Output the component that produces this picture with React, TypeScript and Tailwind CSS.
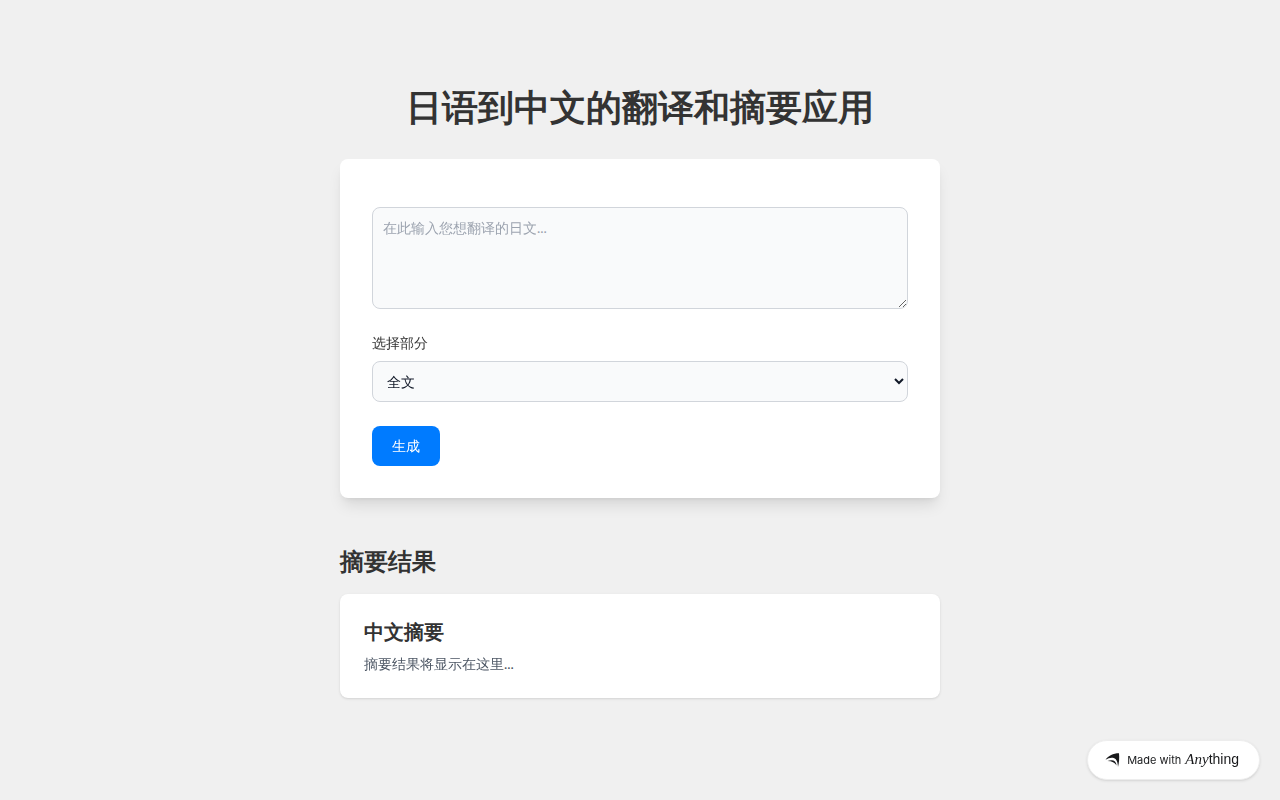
import React, { useState } from "react";

const parts = ["全文", "标题", "正文", "结论"];

const MadeWithBadge = () => {
    return (
        <a
            href="#"
            aria-label="Made with Anything"
            className="fixed bottom-5 right-5 flex h-[40px] items-center rounded-full border border-[#ededed] bg-white pl-[17px] pr-5 text-[#18191b] shadow-sm"
        >
            <svg width="16" height="16" viewBox="0 0 16 16" fill="currentColor" className="mr-1.5">
                <path d="M.5 7.800C3.500 3.900 8 1.300 14 1.300c.5 5.200.1 9.700-1 13.700C12.800 10.300 11.600 7 8.700 6.100 6.200 5.400 3.300 6.200.5 7.800Z" />
                <path d="M2.500 9.100c4.800-2 8.700-.7 9.100 4.500-1.900-3-4.600-4.400-9.100-4.500Z" />
            </svg>
            <span className="flex items-baseline">
                <span className="mr-1 text-[11px] font-['Inter',sans-serif]">Made with</span>
                <span className="text-[15px] font-['Liberation_Serif',serif] italic">Any</span>
                <span className="text-[14px] font-['Liberation_Sans',sans-serif]">thing</span>
            </span>
        </a>
    );
};

const App = () => {
    const [text, setText] = useState("");
    const [part, setPart] = useState("全文");
    const [summary, setSummary] = useState("");

    const handleSubmit = (e: React.FormEvent) => {
        e.preventDefault();
        setSummary(text ? `${part}：${text}` : "");
    };

    return (
        <div className="min-h-screen bg-[#f0f0f0] px-4 py-20 text-sm text-[#333] font-['Lato','WenQuanYi_Zen_Hei','Noto_Sans_CJK_SC',sans-serif]">
            <main className="mx-auto max-w-[600px]">
                <h1 className="mb-[22px] text-center text-4xl leading-[57px] font-semibold font-['Roboto',sans-serif]">日语到中文的翻译和摘要应用</h1>
                <form onSubmit={handleSubmit} className="rounded-lg bg-white px-8 pt-12 pb-8 shadow-lg">
                    <textarea
                        aria-label="日文"
                        placeholder="在此输入您想翻译的日文..."
                        value={text}
                        onChange={(e) => setText(e.target.value)}
                        className="mb-6 block h-[102px] w-full rounded-lg border border-[#d1d5db] bg-[#f9fafb] p-2.5 text-[#111827] placeholder:text-[#9ca3af]"
                    />
                    <label htmlFor="part" className="mb-2 block">选择部分</label>
                    <select
                        id="part"
                        value={part}
                        onChange={(e) => setPart(e.target.value)}
                        className="mb-6 block h-[41px] w-full rounded-lg border border-[#d1d5db] bg-[#f9fafb] px-2.5 text-[#111827]"
                    >
                        {parts.map((p) => (
                            <option key={p} value={p}>{p}</option>
                        ))}
                    </select>
                    <button type="submit" className="block rounded-lg bg-[#007bff] px-5 py-2.5 text-white hover:bg-[#0069d9]">
                        生成
                    </button>
                </form>
                <section className="mt-12">
                    <h2 className="mb-4 text-2xl font-semibold font-['Roboto',sans-serif]">摘要结果</h2>
                    <div className="rounded-lg bg-white p-6 shadow-sm">
                        <h3 className="mb-2 text-xl font-semibold font-['Roboto',sans-serif]">中文摘要</h3>
                        <p className="text-[#4b5563]">{summary || "摘要结果将显示在这里..."}</p>
                    </div>
                </section>
            </main>
            <MadeWithBadge />
        </div>
    );
};

export default App;
